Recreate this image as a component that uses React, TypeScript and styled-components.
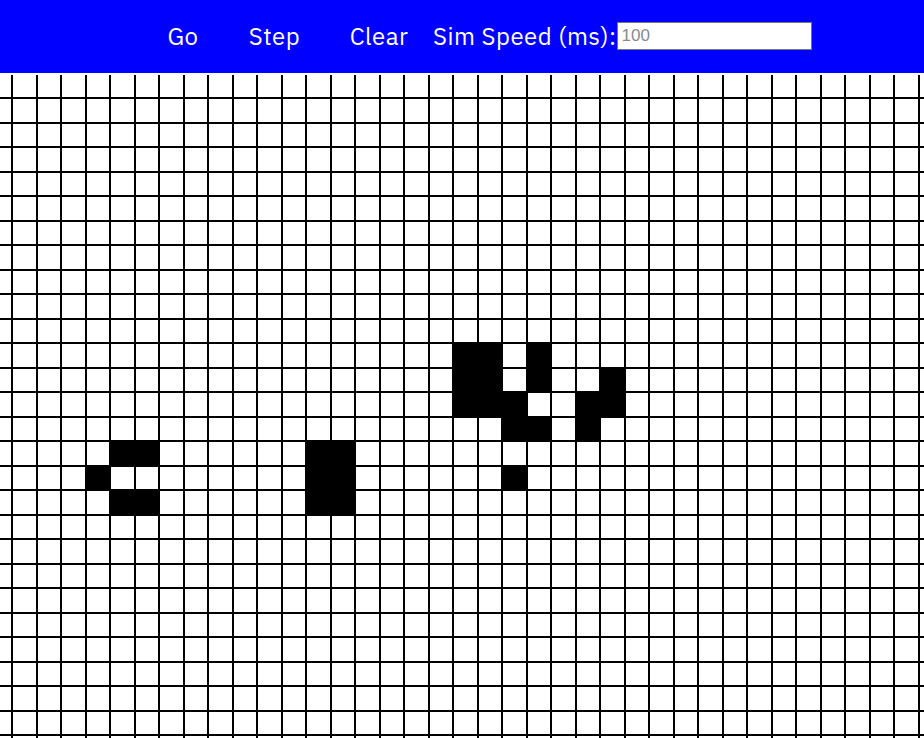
import React, { useState } from "react";
import styled, { createGlobalStyle } from "styled-components";

const GlobalStyle = createGlobalStyle`
  html, body {
    margin: 0;
    padding: 0;
    overflow: hidden;
    background: #ffffff;
  }
  * { box-sizing: border-box; }
`;

const COLS = 39;
const ROWS = 28;
const PITCH = 24.5;

const LIVE: Array<[number, number]> = [
  [18, 10], [19, 10], [21, 10],
  [18, 11], [19, 11], [21, 11], [24, 11],
  [18, 12], [19, 12], [20, 12], [23, 12], [24, 12],
  [20, 13], [21, 13], [23, 13],
  [20, 15],
  [4, 14], [5, 14], [12, 14], [13, 14],
  [3, 15], [12, 15], [13, 15],
  [4, 16], [5, 16], [12, 16], [13, 16],
];

const Page = styled.div`
  width: 924px;
  height: 738px;
  display: flex;
  flex-direction: column;
  overflow: hidden;
`;

const Toolbar = styled.header`
  flex: 0 0 73px;
  height: 73px;
  background: #0000ff;
  display: flex;
  align-items: center;
  padding-left: 142px;
  padding-bottom: 1px;
  font-family: "IBM Plex Sans", "Open Sans", sans-serif;
  letter-spacing: 0.5px;
  color: #ffffff;
`;

const ToolButton = styled.button<{ $w: number }>`
  width: ${(p) => p.$w}px;
  background: transparent;
  border: none;
  color: #ffffff;
  font-family: inherit;
  letter-spacing: inherit;
  font-size: 24px;
  padding: 0;
  cursor: pointer;
  text-align: center;
`;

const SpeedLabel = styled.label`
  font-size: 24px;
  white-space: nowrap;
  display: flex;
  align-items: center;
`;

const SpeedInput = styled.input`
  width: 195px;
  height: 28px;
  margin-left: 0;
  border: 1px solid #767676;
  background: #ffffff;
  font-family: "Liberation Sans", Arial, sans-serif;
  font-size: 17px;
  letter-spacing: 0;
  padding: 1px 4px;
  color: #000;
  &::placeholder { color: #8a8a8a; }
`;

const BoardWrap = styled.div`
  flex: 1 1 auto;
  overflow: hidden;
  padding-top: 1.5px;
`;

const Board = styled.div`
  display: grid;
  grid-template-columns: repeat(${COLS}, ${PITCH}px);
  grid-auto-rows: ${PITCH}px;
  margin-left: -11.5px;
  width: ${COLS * PITCH}px;
`;

const Cell = styled.div<{ $alive: boolean }>`
  border-right: 2px solid #000;
  border-bottom: 2px solid #000;
  background: ${(p) => (p.$alive ? "#000" : "#fff")};
`;

export default function App() {
  const [alive, setAlive] = useState<Set<string>>(
    () => new Set(LIVE.map(([k, j]) => `${k + 1}-${j + 1}`))
  );

  const toggle = (key: string) => {
    setAlive((prev) => {
      const next = new Set(prev);
      if (next.has(key)) next.delete(key);
      else next.add(key);
      return next;
    });
  };

  const cells: React.ReactNode[] = [];
  for (let r = 0; r < ROWS; r++) {
    for (let c = 0; c < COLS; c++) {
      const key = `${c}-${r}`;
      cells.push(
        <Cell key={key} $alive={alive.has(key)} onClick={() => toggle(key)} />
      );
    }
  }

  return (
    <Page>
      <GlobalStyle />
      <Toolbar>
        <ToolButton $w={82}>Go</ToolButton>
        <ToolButton $w={101}>Step</ToolButton>
        <ToolButton $w={108}>Clear</ToolButton>
        <SpeedLabel>
          Sim Speed (ms):
          <SpeedInput placeholder="100" />
        </SpeedLabel>
      </Toolbar>
      <BoardWrap>
        <Board>{cells}</Board>
      </BoardWrap>
    </Page>
  );
}
